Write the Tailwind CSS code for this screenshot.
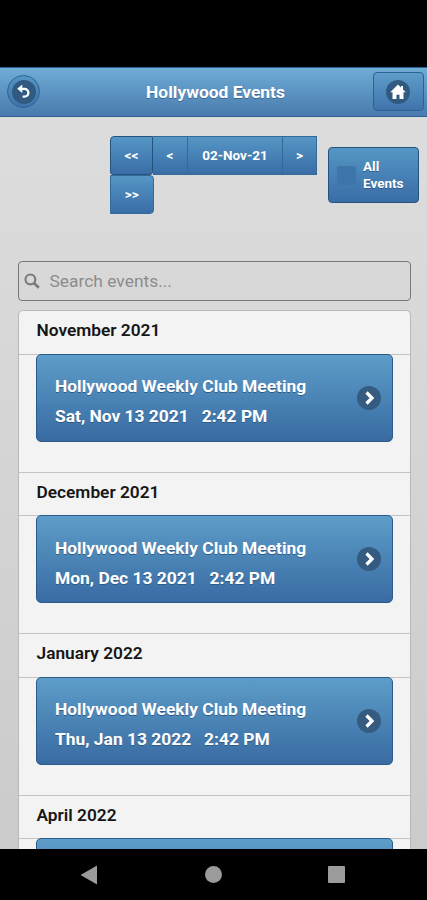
<!DOCTYPE html>
<html lang="en">
<head>
  <meta charset="UTF-8" />
  <meta name="viewport" content="width=device-width, initial-scale=1.0"/>
  <title>Hollywood Events</title>
  <script src="https://cdn.jsdelivr.net/npm/@tailwindcss/browser@4"></script>
  <style>
    body { font-family: Roboto, 'Liberation Sans', sans-serif; }
  </style>
</head>
<body class="bg-black h-[900px] overflow-hidden flex flex-col">
  <!-- Status bar -->
  <div class="h-[67px] shrink-0"></div>

  <!-- Header -->
  <header class="h-[50px] shrink-0 flex items-center justify-between pl-[7px] pr-[3px] pb-px border-y border-[#2c6191] bg-linear-to-b from-[#6facd5] to-[#497bae]">
    <a href="#" aria-label="Back" class="w-[33px] h-[33px] rounded-full border border-[#2c6191] bg-linear-to-b from-[#5596c5] to-[#3e73aa] flex items-center justify-center">
      <span class="w-6 h-6 rounded-full bg-[#305a80] flex items-center justify-center">
        <svg viewBox="0 0 16 16" class="w-4 h-4" fill="none">
          <path d="M4 4.8h4.5a3.9 3.9 0 0 1 0 7.8H6.6" stroke="white" stroke-width="2.3" />
          <path d="M6.3 0.6v8.4L1.2 4.8z" fill="white" />
        </svg>
      </span>
    </a>
    <h1 class="text-[17.4px] leading-none font-bold text-white text-shadow-[0_1px_0_#3e6790] pl-[18px] pt-[3px]">Hollywood Events</h1>
    <a href="#" aria-label="Home" class="w-[51px] h-[39px] rounded-[4px] border border-[#2c6191] bg-linear-to-b from-[#5f9dca] to-[#3f74ab] flex items-center justify-center">
      <span class="w-6 h-6 rounded-full bg-[#305a80] flex items-center justify-center">
        <svg viewBox="0 0 16 16" class="w-4 h-4" fill="white">
          <path d="M8 0.5 0.2 8.2h2.3V15h4v-4.2h3V15h4V8.2h2.3L13 5.4V2h-2v1.5z" />
        </svg>
      </span>
    </a>
  </header>

  <!-- Content -->
  <main class="h-[732px] shrink-0 overflow-hidden bg-linear-to-b from-[#dddddd] to-[#cbcbcb] px-[18px]">
    <!-- Date controls -->
    <div class="h-[144px] pl-[92px] pt-[19px] flex justify-between -mr-[10px] text-[13.5px] font-bold text-white text-shadow-[0_1px_0_#2f5a88]">
      <div class="w-[208px]">
        <div class="h-[39px] flex">
          <button class="w-[43px] h-[39px] rounded-tl-[4px] rounded-b-[3px] border border-[#23547f] bg-linear-to-b from-[#5596c5] to-[#3a6da6]">&lt;&lt;</button>
          <button class="w-[35px] h-[39px] border-y border-r border-[#336a98] bg-linear-to-b from-[#5596c5] to-[#3a6da6]">&lt;</button>
          <button class="w-[95px] h-[39px] border-y border-r border-[#336a98] bg-linear-to-b from-[#5596c5] to-[#3a6da6]">02-Nov-21</button>
          <button class="w-[34px] h-[39px] border-y border-r border-[#336a98] bg-linear-to-b from-[#5596c5] to-[#3a6da6]">&gt;</button>
        </div>
        <button class="block w-[43.5px] h-[39px] rounded-r-[4px] border border-[#336a98] bg-linear-to-b from-[#5596c5] to-[#3a6da6]">&gt;&gt;</button>
      </div>
      <label class="w-[91px] h-[56px] mt-[11px] pl-[8px] rounded-[4px] border border-[#23547f] bg-linear-to-b from-[#5596c5] to-[#3a6da6] flex items-center leading-[17.4px]">
        <span class="w-[19px] h-[19px] mr-[7px] rounded-[2px] bg-[#3f76a9]"></span>
        <span class="w-[44px]">All Events</span>
      </label>
    </div>

    <!-- Search -->
    <div class="w-[393px] h-[40px] rounded-[4px] border-[1.5px] border-[#777777] bg-[#d8d8d8] flex items-center pl-[5px]">
      <svg viewBox="0 0 16 16" class="w-4 h-4" fill="none" stroke="#7c7c7c">
        <circle cx="6.4" cy="6.4" r="4.9" stroke-width="2.2" />
        <path d="M10 10l4.8 4.8" stroke-width="2.8" />
      </svg>
      <span class="ml-[9.5px] text-[17.4px] text-[#8c8c8c]">Search events...</span>
    </div>

    <!-- Events list -->
    <div class="w-[393px] mt-[9px] rounded-t-[5px] border border-[#b9b9b9] bg-[#f3f3f3] text-[17.4px] font-bold">
      <h2 class="h-[42.5px] pl-[17.5px] pt-[6px] leading-[26px] text-[17.3px] font-semibold text-[#161616]">November 2021</h2>
      <div class="h-[119px] px-[17px] border-y border-[#c3c3c3]">
        <a href="#" class="h-[88px] rounded-[5px] -mt-px pl-[18px] pr-[11px] border border-[#295a88] bg-linear-to-b from-[#5d9dc9] to-[#396ba2] flex items-center justify-between text-white text-shadow-[0_1px_0_#305a86]">
          <span class="leading-[30px] mt-[7px]">Hollywood Weekly Club Meeting<br>Sat, Nov 13 2021 &nbsp; 2:42 PM</span>
          <svg viewBox="0 0 24 24" class="w-6 h-6" fill="none">
            <circle cx="12" cy="12" r="12" fill="#355c80" />
            <path d="M9.5 6.5 15 12l-5.5 5.5" stroke="white" stroke-width="3.2" />
          </svg>
        </a>
      </div>

      <h2 class="h-[42.5px] pl-[17.5px] pt-[6px] leading-[26px] text-[17.3px] font-semibold text-[#161616]">December 2021</h2>
      <div class="h-[119px] px-[17px] border-y border-[#c3c3c3]">
        <a href="#" class="h-[88px] rounded-[5px] -mt-px pl-[18px] pr-[11px] border border-[#295a88] bg-linear-to-b from-[#5d9dc9] to-[#396ba2] flex items-center justify-between text-white text-shadow-[0_1px_0_#305a86]">
          <span class="leading-[30px] mt-[7px]">Hollywood Weekly Club Meeting<br>Mon, Dec 13 2021 &nbsp; 2:42 PM</span>
          <svg viewBox="0 0 24 24" class="w-6 h-6" fill="none">
            <circle cx="12" cy="12" r="12" fill="#355c80" />
            <path d="M9.5 6.5 15 12l-5.5 5.5" stroke="white" stroke-width="3.2" />
          </svg>
        </a>
      </div>

      <h2 class="h-[42.5px] pl-[17.5px] pt-[6px] leading-[26px] text-[17.3px] font-semibold text-[#161616]">January 2022</h2>
      <div class="h-[119px] px-[17px] border-y border-[#c3c3c3]">
        <a href="#" class="h-[88px] rounded-[5px] -mt-px pl-[18px] pr-[11px] border border-[#295a88] bg-linear-to-b from-[#5d9dc9] to-[#396ba2] flex items-center justify-between text-white text-shadow-[0_1px_0_#305a86]">
          <span class="leading-[30px] mt-[7px]">Hollywood Weekly Club Meeting<br>Thu, Jan 13 2022 &nbsp; 2:42 PM</span>
          <svg viewBox="0 0 24 24" class="w-6 h-6" fill="none">
            <circle cx="12" cy="12" r="12" fill="#355c80" />
            <path d="M9.5 6.5 15 12l-5.5 5.5" stroke="white" stroke-width="3.2" />
          </svg>
        </a>
      </div>

      <h2 class="h-[42.5px] pl-[17.5px] pt-[6px] leading-[26px] text-[17.3px] font-semibold text-[#161616]">April 2022</h2>
      <div class="h-[119px] px-[17px] border-y border-[#c3c3c3]">
        <a href="#" aria-label="April event" class="block h-[88px] -mt-px rounded-[5px] border border-[#295a88] bg-linear-to-b from-[#5d9dc9] to-[#396ba2]"></a>
      </div>
    </div>
  </main>

  <!-- Android navigation -->
  <nav class="h-[51px] shrink-0 flex items-center justify-between pl-[80px] pr-[82px]">
    <svg viewBox="0 0 18 20" class="w-[18px] h-5" fill="#9b9b9b"><path d="M17 0.5v19L0.5 10z" /></svg>
    <span class="w-[17px] h-[17px] rounded-full bg-[#9b9b9b]"></span>
    <span class="w-[17px] h-[17px] rounded-[1px] bg-[#9b9b9b]"></span>
  </nav>
</body>
</html>
